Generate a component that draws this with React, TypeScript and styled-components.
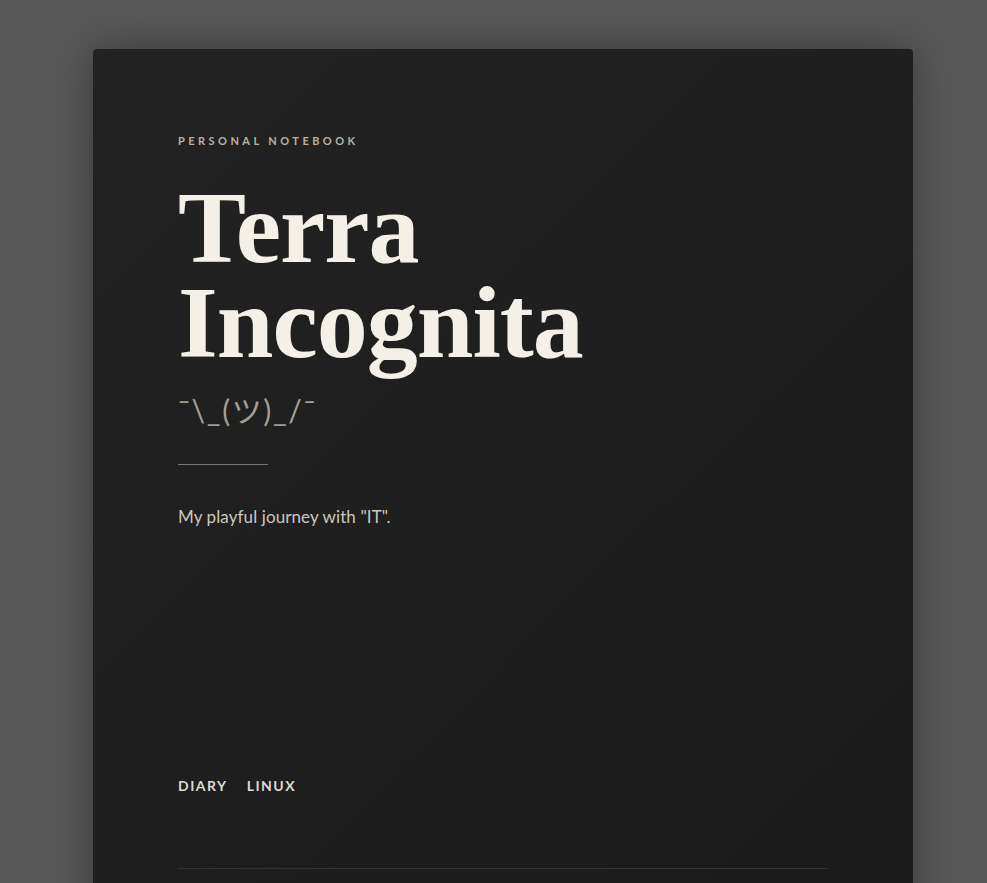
import React from 'react';
import styled, { createGlobalStyle } from 'styled-components';

const GlobalStyle = createGlobalStyle`
    html, body {
        margin: 0;
        padding: 0;
        background: #585858;
        font-family: Lato, "Noto Sans", sans-serif;
    }
`

const Page = styled.div `
    min-height: 883px;
    padding-top: 49px;
    box-sizing: border-box;
    overflow: hidden;
`

const Card = styled.main `
    width: 820px;
    margin-left: 93px;
    box-sizing: border-box;
    padding: 85px 85px 0;
    min-height: 900px;
    border-radius: 4px;
    background-color: #1f1f1f;
    background-image: linear-gradient(135deg, #222222 0%, #1e1e1e 55%, #1b1b1b 100%);
    box-shadow: 0 0 40px rgba(0, 0, 0, 0.35);
`

const Hero = styled.header `
    display: flex;
    flex-direction: column;
    height: 662px;
`

const Kicker = styled.p `
    margin: 0;
    font-size: 11px;
    line-height: 14px;
    font-weight: 700;
    letter-spacing: 3.45px;
    text-transform: uppercase;
    color: #b9b2a4;
`

const Title = styled.h1 `
    margin: 32px 0 0;
    font-family: "Liberation Serif", "DejaVu Serif", serif;
    font-weight: 700;
    font-size: 102px;
    line-height: 95px;
    letter-spacing: -1px;
    color: #f4f0e7;
`

const Shrug = styled.p `
    margin: 22px 0 0;
    font-family: Lato, "Noto Sans CJK JP", sans-serif;
    font-size: 30px;
    line-height: 36px;
    letter-spacing: 1.6px;
    color: #a59e92;
`

const Rule = styled.hr `
    width: 90px;
    margin: 36px 0 0;
    border: 0;
    border-top: 1px solid #7a766f;
`

const Lead = styled.p `
    margin: 38px 0 0;
    font-size: 17px;
    line-height: 27px;
    letter-spacing: 0.1px;
    color: #cdc7bd;
`

const Nav = styled.nav `
    display: flex;
    gap: 19px;
    margin-top: auto;
`

const NavLink = styled.a `
    font-size: 14px;
    line-height: 20px;
    font-weight: 700;
    letter-spacing: 1.5px;
    text-transform: uppercase;
    color: #dedad3;
    text-decoration: none;
`

const Divider = styled.div `
    margin-top: 72px;
    border-top: 1px solid #333333;
`

export default function App() {
    return (
        <Page>
            <GlobalStyle />
            <Card>
                <Hero>
                    <Kicker>Personal Notebook</Kicker>
                    <Title>Terra<br />Incognita</Title>
                    <Shrug>¯\_(ツ)_/¯</Shrug>
                    <Rule />
                    <Lead>My playful journey with "IT".</Lead>
                    <Nav>
                        <NavLink href="#">Diary</NavLink>
                        <NavLink href="#">Linux</NavLink>
                    </Nav>
                </Hero>
                <Divider />
            </Card>
        </Page>
    );
}
